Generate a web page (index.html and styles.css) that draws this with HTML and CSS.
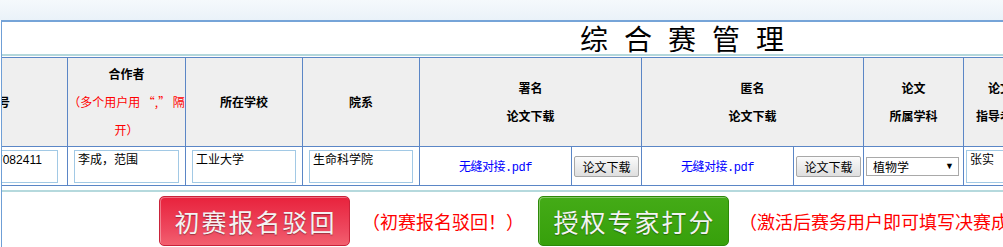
FILE: index.html
```html
<!DOCTYPE html>
<html lang="zh-CN">
<head>
    <meta charset="UTF-8">
    <title>综合赛管理</title>
    <link rel="stylesheet" href="styles.css">
</head>
<body>
    <div class="topbar"></div>
    <div class="panel">
        <div class="sheet">
            <div class="sheet-title">综合赛管理</div>
            <table class="grid">
                <colgroup>
                    <col style="width:139px">
                    <col style="width:118px">
                    <col style="width:117px">
                    <col style="width:117px">
                    <col style="width:152px">
                    <col style="width:70px">
                    <col style="width:152px">
                    <col style="width:70px">
                    <col style="width:100px">
                    <col style="width:73px">
                    <col style="width:140px">
                    <col>
                </colgroup>
                <thead>
                    <tr>
                        <th>编号</th>
                        <th>合作者<br><span class="hint">（多个用户用 “,” 隔<br>开）</span></th>
                        <th>所在学校</th>
                        <th>院系</th>
                        <th colspan="2">署名<br>论文下载</th>
                        <th colspan="2">匿名<br>论文下载</th>
                        <th>论文<br>所属学科</th>
                        <th>论文<br>指导老师</th>
                        <th>联系电话</th>
                        <th>状态</th>
                    </tr>
                </thead>
                <tbody>
                    <tr>
                        <td class="first"><textarea class="field field-id">2017082411</textarea></td>
                        <td><textarea class="field">李成，范围</textarea></td>
                        <td><textarea class="field">工业大学</textarea></td>
                        <td><textarea class="field">生命科学院</textarea></td>
                        <td class="center"><a href="#" class="file">无缝对接.pdf</a></td>
                        <td class="center"><button class="dl-btn">论文下载</button></td>
                        <td class="center"><a href="#" class="file">无缝对接.pdf</a></td>
                        <td class="center"><button class="dl-btn">论文下载</button></td>
                        <td class="pick-cell">
                            <span class="pick">
                                <select>
                                    <option>植物学</option>
                                    <option>动物学</option>
                                </select>
                            </span>
                        </td>
                        <td class="last"><textarea class="field">张实</textarea></td>
                        <td><textarea class="field">13800000000</textarea></td>
                        <td></td>
                    </tr>
                </tbody>
            </table>
        </div>
        <div class="actions">
            <button class="big-btn reject">初赛报名驳回</button>
            <span class="note">（初赛报名驳回！）</span>
            <button class="big-btn grant">授权专家打分</button>
            <span class="note">（激活后赛务用户即可填写决赛成绩！）</span>
        </div>
    </div>
</body>
</html>
```

FILE: styles.css
```css
body {
    margin: 0;
    font-family: "Liberation Sans", "Noto Sans CJK SC", sans-serif;
    font-size: 12px;
    color: #000;
    background-color: #fff;
    overflow: hidden;
}
.topbar {
    height: 20px;
    background: linear-gradient(#f5f9fc, #eaf2f9); /* 顶部浅蓝条 */
}
.panel {
    margin-left: 1px;
    border-left: 1px solid #6f9fd6;
    border-top: 2px solid #76a4d8;
    overflow: hidden;
    height: 225px;
}
.sheet {
    width: 1506px;
    margin-left: -73px;
}
.sheet-title {
    height: 32px;
    line-height: 32px;
    text-align: center;
    font-family: "Noto Sans CJK SC", sans-serif;
    font-size: 28px;
    letter-spacing: 16px;
    text-indent: 16px;
    border-bottom: 2px solid #b3d7db;
    margin-bottom: 1px;
}
.grid {
    width: 100%;
    table-layout: fixed;
    border-collapse: separate;
    border-spacing: 0;
    border-top: 1px solid #5b86c6;
    border-bottom: 2px solid #fff;
}
.grid th,
.grid td {
    box-sizing: border-box;
    border-right: 1px solid #5b86c6;
    border-bottom: 1px solid #5b86c6;
    padding: 0;
}
.grid th {
    height: 89px;
    background-color: #efefef;
    font-family: "Noto Sans CJK SC", sans-serif;
    font-size: 12px;
    font-weight: bold;
    line-height: 28px;
    text-align: center;
    vertical-align: middle;
}
.hint {
    color: #ff0000;
    font-weight: normal;
}
.grid td {
    height: 39px;
    padding: 0 6px;
    vertical-align: middle;
}
.grid td.first {
    padding: 0 9px 0 43px;
}
.grid td.center {
    padding: 0 2px;
    text-align: center;
}
.grid td.pick-cell {
    padding: 0 4px 0 2px;
}
.grid td.last {
    padding: 0 0 0 2px;
}
.field {
    display: block;
    box-sizing: border-box;
    width: 100%;
    height: 33px;
    margin: 0;
    padding: 2px 3px;
    border: 1px solid #a2c9e5;
    font-family: "Liberation Sans", "Noto Sans CJK SC", sans-serif;
    font-size: 12px;
    line-height: 15px;
    resize: none;
    overflow: hidden;
    color: #000;
}
.file {
    color: #0000ff;
    text-decoration: none;
    font-family: "Liberation Mono", "Noto Sans CJK SC", monospace;
    font-size: 12px;
    letter-spacing: -0.5px;
}
.dl-btn {
    width: 65px;
    height: 21px;
    padding: 0;
    border: 1px solid #a8a8a8;
    border-radius: 2px;
    background: linear-gradient(#fbfbfb, #dedede);
    font-family: "Noto Sans CJK SC", sans-serif;
    font-size: 12px;
    color: #000;
    display: block;
}
.pick {
    position: relative;
    display: block;
}
.pick select {
    display: block;
    width: 93px;
    height: 19px;
    padding: 0 0 0 6px;
    border: 1px solid #a9a9a9;
    background-color: #fff;
    font-family: "Noto Sans CJK SC", sans-serif;
    font-size: 12px;
    appearance: none;
    -webkit-appearance: none;
    color: #000;
}
.pick::after {
    content: "▼";
    position: absolute;
    left: 79px;
    top: 4px;
    font-size: 9px;
    line-height: 10px;
    pointer-events: none;
}
.actions {
    margin-top: 2px;
    border-top: 2px solid #b5d9dd;
    padding: 4px 0 0 157px;
    display: flex;
    align-items: center;
    white-space: nowrap;
}
.big-btn {
    flex: none;
    box-sizing: border-box;
    width: 191px;
    height: 50px;
    padding: 0 0 0 2px;
    border-radius: 5px;
    border: 1px solid;
    font-family: "Noto Sans CJK SC", sans-serif;
    font-size: 25px;
    letter-spacing: 2px;
    color: #f3f3f3;
    text-shadow: 0 1px 1px rgba(0, 0, 0, 0.35);
    cursor: pointer;
}
.reject {
    background: linear-gradient(#e8223c, #ee4a60 70%, #f2606f);
    border-color: #c9233a;
    box-shadow: inset 1px 1px 0 rgba(255, 255, 255, 0.35);
}
.grant {
    background: linear-gradient(#44ab17, #37a00b);
    border-color: #2d8908;
    box-shadow: inset 1px 1px 0 rgba(255, 255, 255, 0.35);
}
.note {
    color: #ff0000;
    font-family: "Noto Sans CJK SC", sans-serif;
    font-size: 18px;
    margin: 0 14px 0 12px;
}
.note:last-child {
    margin: 0 0 0 10px;
}
```
